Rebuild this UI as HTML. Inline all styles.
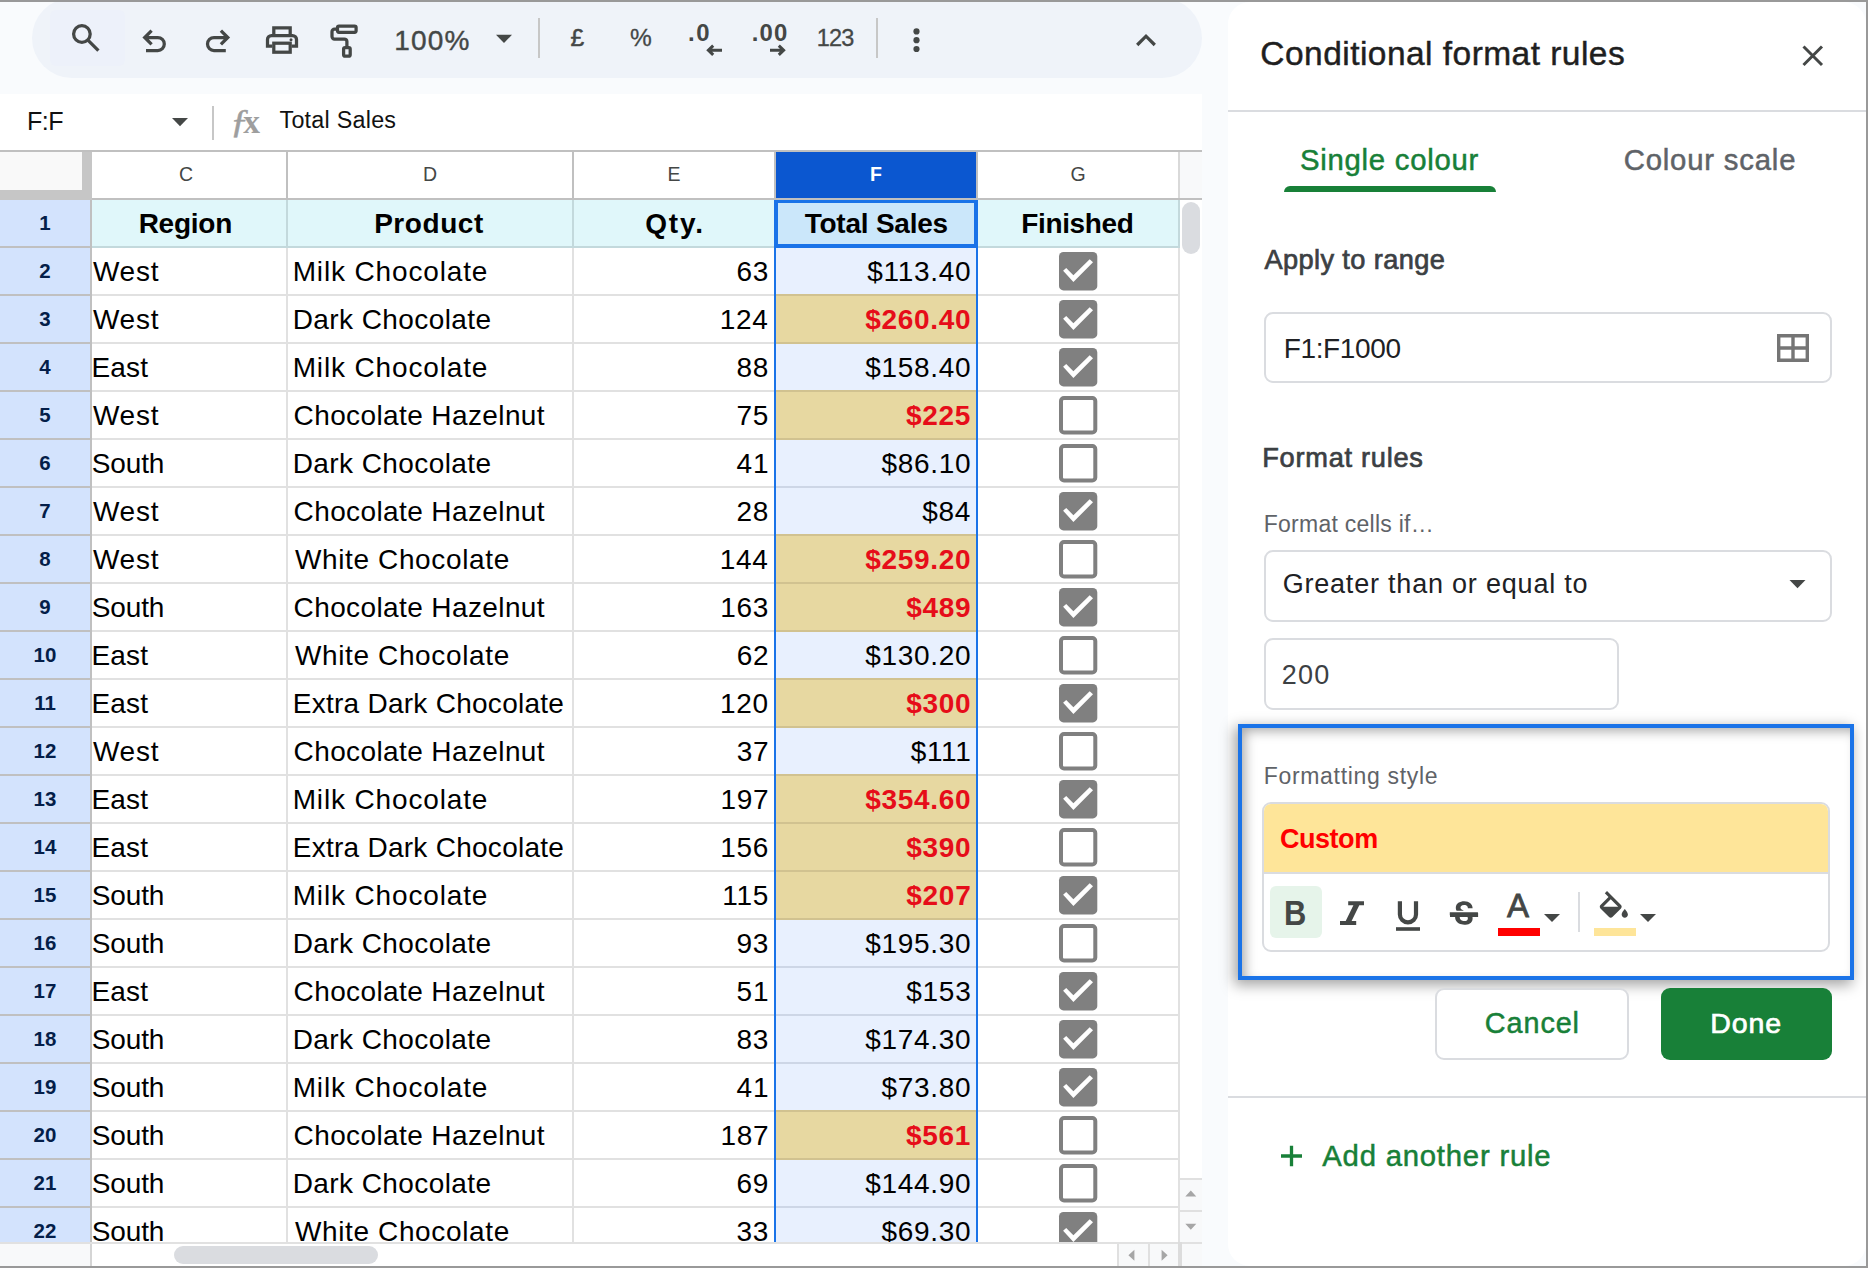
<!DOCTYPE html>
<html lang="en"><head><meta charset="utf-8"><title>Conditional format rules</title>
<style>
html,body{margin:0;padding:0;}
body{width:1868px;height:1268px;overflow:hidden;position:relative;background:#f9fbfd;font-family:"Liberation Sans",sans-serif;}
.t{position:absolute;white-space:nowrap;display:block;}
.r{position:absolute;}
svg{position:absolute;left:0;top:0;overflow:visible;}
</style></head><body>
<header class="toolbar">
<div class="r" style="left:32px;top:-2px;width:1170px;height:80px;background:#eff3f9;border-radius:40px;"></div>
<div class="r" style="left:50px;top:10px;width:75px;height:56px;background:#edf1fa;border-radius:6px;"></div>
<svg width="1868" height="1268" viewBox="0 0 1868 1268" fill="none" stroke="#444746" stroke-width="3.25"><circle cx="81.9" cy="34" r="8.3"/><path d="M87.9 40.1 L98.4 50.6"/><path d="M151.6 30.6 L144.7 37.5 L151.6 44.4 M145.2 37.5 H157.8 A6.5 6.5 0 0 1 157.8 50.5 H146"/><path d="M220.9 30.6 L227.8 37.5 L220.9 44.4 M227.3 37.5 H214 A6.5 6.5 0 0 0 214 50.5 H225.8"/><path d="M273.8 35 V27.8 H290.2 V35"/><path d="M272.3 46.2 H267.5 V39.5 A4 4 0 0 1 271.5 35.5 H292.5 A4 4 0 0 1 296.5 39.5 V46.2 H291.7"/><rect x="273.8" y="43.2" width="16.4" height="9"/><circle cx="291" cy="39.7" r="1.5" fill="#444746" stroke="none"/><rect x="337.5" y="26.1" width="18.6" height="6.2" rx="1.5"/><path d="M337.5 29.2 H334.5 A2.5 2.5 0 0 0 332 31.7 V36.5 A2.5 2.5 0 0 0 334.5 39 H344.4 A2.5 2.5 0 0 1 346.9 41.5 V46.5"/><rect x="343.6" y="47.6" width="6.6" height="8.6" rx="1.5"/><path d="M496 34.8 H512 L504 43 Z" fill="#444746" stroke="none"/><path d="M722 50.2 H708.5 M713.2 45.6 L708.4 50.2 L713.2 54.8" stroke-width="3"/><path d="M770 50.2 H783.5 M778.8 45.6 L783.6 50.2 L778.8 54.8" stroke-width="3"/><circle cx="916.5" cy="31.4" r="3.1" fill="#444746" stroke="none"/><circle cx="916.5" cy="40.2" r="3.1" fill="#444746" stroke="none"/><circle cx="916.5" cy="49" r="3.1" fill="#444746" stroke="none"/><path d="M1137.2 45 L1146 36.2 L1154.8 45"/></svg>
<div class="r" style="left:538px;top:18px;width:2px;height:40px;background:#c7c7c7;"></div>
<div class="r" style="left:876px;top:18px;width:2px;height:40px;background:#c7c7c7;"></div>
<span class="t" style="left:394.37px;top:26.60px;font-size:28px;line-height:28px;color:#444746;-webkit-text-stroke:0.4px #444746;letter-spacing:1.172px;">100%</span>
<span class="t" style="left:570.61px;top:25.66px;font-size:24.5px;line-height:24.5px;color:#444746;-webkit-text-stroke:0.5px #444746;">£</span>
<span class="t" style="left:630.03px;top:25.66px;font-size:24.5px;line-height:24.5px;color:#444746;-webkit-text-stroke:0.3px #444746;">%</span>
<span class="t" style="left:687.88px;top:21.47px;font-size:23.9px;line-height:23.9px;color:#444746;font-weight:700;letter-spacing:1.670px;">.0</span>
<span class="t" style="left:751.68px;top:21.47px;font-size:23.9px;line-height:23.9px;color:#444746;font-weight:700;letter-spacing:1.239px;">.00</span>
<span class="t" style="left:816.81px;top:27.01px;font-size:23.5px;line-height:23.5px;color:#444746;-webkit-text-stroke:0.3px #444746;letter-spacing:-0.793px;">123</span>
</header>
<section class="formula-bar">
<div class="r" style="left:0px;top:94px;width:1202px;height:56px;background:#fff;"></div>
<div class="r" style="left:0px;top:150px;width:1202px;height:2px;background:#c0c0c0;"></div>
<span class="t" style="left:27.04px;top:108.75px;font-size:25.1px;line-height:25.1px;color:#111;letter-spacing:-0.487px;">F:F</span>
<svg width="1868" height="1268" viewBox="0 0 1868 1268"><path d="M172 118 H188 L180 126.2 Z" fill="#444746"/></svg>
<div class="r" style="left:212px;top:106px;width:2px;height:34px;background:#c7c7c7;"></div>
<span class="t" style="left:230.30px;top:103.62px;font-size:34px;line-height:34px;color:#9e9e9e;-webkit-text-stroke:0.5px #9e9e9e;font-family:'Liberation Serif',serif;font-style:italic;transform:scaleX(1.12);transform-origin:0 0;">ƒ</span>
<span class="t" style="left:243.20px;top:104.54px;font-size:33.5px;line-height:33.5px;color:#9e9e9e;font-weight:700;font-family:'Liberation Serif',serif;">x</span>
<span class="t" style="left:279.48px;top:108.98px;font-size:23.3px;line-height:23.3px;color:#111;letter-spacing:0.259px;">Total Sales</span>
</section>
<main class="grid">
<div class="r" style="left:0px;top:152px;width:1202px;height:1092px;background:#fff;"></div>
<div class="r" style="left:0px;top:152px;width:82px;height:38px;background:#f9f9f9;"></div>
<div class="r" style="left:82px;top:152px;width:10px;height:48px;background:#c6c6c6;"></div>
<div class="r" style="left:0px;top:190px;width:92px;height:10px;background:#c6c6c6;"></div>
<div class="r" style="left:1180px;top:152px;width:22px;height:46px;background:#f8f9fa;"></div>
<div class="r" style="left:92px;top:200px;width:1088px;height:46px;background:#e0f7fa;"></div>
<div class="r" style="left:0px;top:200px;width:90px;height:1042px;background:#d3e3fd;"></div>
<div class="r" style="left:90px;top:200px;width:2px;height:1042px;background:#c0c0c0;"></div>
<div class="r" style="left:776px;top:152px;width:200px;height:46px;background:#0b57d0;"></div>
<div class="r" style="left:776px;top:200px;width:200px;height:46px;background:#cbe7fa;"></div>
<div class="r" style="left:776px;top:248px;width:200px;height:46px;background:#e8f0fe;"></div>
<div class="r" style="left:776px;top:295px;width:200px;height:48px;background:#e7d8a1;"></div>
<div class="r" style="left:776px;top:344px;width:200px;height:46px;background:#e8f0fe;"></div>
<div class="r" style="left:776px;top:391px;width:200px;height:48px;background:#e7d8a1;"></div>
<div class="r" style="left:776px;top:440px;width:200px;height:46px;background:#e8f0fe;"></div>
<div class="r" style="left:776px;top:488px;width:200px;height:46px;background:#e8f0fe;"></div>
<div class="r" style="left:776px;top:535px;width:200px;height:48px;background:#e7d8a1;"></div>
<div class="r" style="left:776px;top:583px;width:200px;height:48px;background:#e7d8a1;"></div>
<div class="r" style="left:776px;top:632px;width:200px;height:46px;background:#e8f0fe;"></div>
<div class="r" style="left:776px;top:679px;width:200px;height:48px;background:#e7d8a1;"></div>
<div class="r" style="left:776px;top:728px;width:200px;height:46px;background:#e8f0fe;"></div>
<div class="r" style="left:776px;top:775px;width:200px;height:48px;background:#e7d8a1;"></div>
<div class="r" style="left:776px;top:823px;width:200px;height:48px;background:#e7d8a1;"></div>
<div class="r" style="left:776px;top:871px;width:200px;height:48px;background:#e7d8a1;"></div>
<div class="r" style="left:776px;top:920px;width:200px;height:46px;background:#e8f0fe;"></div>
<div class="r" style="left:776px;top:968px;width:200px;height:46px;background:#e8f0fe;"></div>
<div class="r" style="left:776px;top:1016px;width:200px;height:46px;background:#e8f0fe;"></div>
<div class="r" style="left:776px;top:1064px;width:200px;height:46px;background:#e8f0fe;"></div>
<div class="r" style="left:776px;top:1111px;width:200px;height:48px;background:#e7d8a1;"></div>
<div class="r" style="left:776px;top:1160px;width:200px;height:46px;background:#e8f0fe;"></div>
<div class="r" style="left:776px;top:1208px;width:200px;height:34px;background:#e8f0fe;"></div>
<div class="r" style="left:92px;top:198px;width:1110px;height:2px;background:#c0c0c0;"></div>
<div class="r" style="left:0px;top:246px;width:90px;height:2px;background:#c0c0c0;"></div>
<div class="r" style="left:92px;top:246px;width:682px;height:2px;background:#c3d9dc;"></div>
<div class="r" style="left:978px;top:246px;width:202px;height:2px;background:#c3d9dc;"></div>
<div class="r" style="left:0px;top:294px;width:90px;height:2px;background:#c0c0c0;"></div>
<div class="r" style="left:92px;top:294px;width:682px;height:2px;background:#e1e1e1;"></div>
<div class="r" style="left:978px;top:294px;width:202px;height:2px;background:#e1e1e1;"></div>
<div class="r" style="left:776px;top:294px;width:200px;height:2px;background:#d1c290;"></div>
<div class="r" style="left:0px;top:342px;width:90px;height:2px;background:#c0c0c0;"></div>
<div class="r" style="left:92px;top:342px;width:682px;height:2px;background:#e1e1e1;"></div>
<div class="r" style="left:978px;top:342px;width:202px;height:2px;background:#e1e1e1;"></div>
<div class="r" style="left:776px;top:342px;width:200px;height:2px;background:#d1c290;"></div>
<div class="r" style="left:0px;top:390px;width:90px;height:2px;background:#c0c0c0;"></div>
<div class="r" style="left:92px;top:390px;width:682px;height:2px;background:#e1e1e1;"></div>
<div class="r" style="left:978px;top:390px;width:202px;height:2px;background:#e1e1e1;"></div>
<div class="r" style="left:776px;top:390px;width:200px;height:2px;background:#d1c290;"></div>
<div class="r" style="left:0px;top:438px;width:90px;height:2px;background:#c0c0c0;"></div>
<div class="r" style="left:92px;top:438px;width:682px;height:2px;background:#e1e1e1;"></div>
<div class="r" style="left:978px;top:438px;width:202px;height:2px;background:#e1e1e1;"></div>
<div class="r" style="left:776px;top:438px;width:200px;height:2px;background:#d1c290;"></div>
<div class="r" style="left:0px;top:486px;width:90px;height:2px;background:#c0c0c0;"></div>
<div class="r" style="left:92px;top:486px;width:682px;height:2px;background:#e1e1e1;"></div>
<div class="r" style="left:978px;top:486px;width:202px;height:2px;background:#e1e1e1;"></div>
<div class="r" style="left:776px;top:486px;width:200px;height:2px;background:#cdd6e6;"></div>
<div class="r" style="left:0px;top:534px;width:90px;height:2px;background:#c0c0c0;"></div>
<div class="r" style="left:92px;top:534px;width:682px;height:2px;background:#e1e1e1;"></div>
<div class="r" style="left:978px;top:534px;width:202px;height:2px;background:#e1e1e1;"></div>
<div class="r" style="left:776px;top:534px;width:200px;height:2px;background:#d1c290;"></div>
<div class="r" style="left:0px;top:582px;width:90px;height:2px;background:#c0c0c0;"></div>
<div class="r" style="left:92px;top:582px;width:682px;height:2px;background:#e1e1e1;"></div>
<div class="r" style="left:978px;top:582px;width:202px;height:2px;background:#e1e1e1;"></div>
<div class="r" style="left:776px;top:582px;width:200px;height:2px;background:#d1c290;"></div>
<div class="r" style="left:0px;top:630px;width:90px;height:2px;background:#c0c0c0;"></div>
<div class="r" style="left:92px;top:630px;width:682px;height:2px;background:#e1e1e1;"></div>
<div class="r" style="left:978px;top:630px;width:202px;height:2px;background:#e1e1e1;"></div>
<div class="r" style="left:776px;top:630px;width:200px;height:2px;background:#d1c290;"></div>
<div class="r" style="left:0px;top:678px;width:90px;height:2px;background:#c0c0c0;"></div>
<div class="r" style="left:92px;top:678px;width:682px;height:2px;background:#e1e1e1;"></div>
<div class="r" style="left:978px;top:678px;width:202px;height:2px;background:#e1e1e1;"></div>
<div class="r" style="left:776px;top:678px;width:200px;height:2px;background:#d1c290;"></div>
<div class="r" style="left:0px;top:726px;width:90px;height:2px;background:#c0c0c0;"></div>
<div class="r" style="left:92px;top:726px;width:682px;height:2px;background:#e1e1e1;"></div>
<div class="r" style="left:978px;top:726px;width:202px;height:2px;background:#e1e1e1;"></div>
<div class="r" style="left:776px;top:726px;width:200px;height:2px;background:#d1c290;"></div>
<div class="r" style="left:0px;top:774px;width:90px;height:2px;background:#c0c0c0;"></div>
<div class="r" style="left:92px;top:774px;width:682px;height:2px;background:#e1e1e1;"></div>
<div class="r" style="left:978px;top:774px;width:202px;height:2px;background:#e1e1e1;"></div>
<div class="r" style="left:776px;top:774px;width:200px;height:2px;background:#d1c290;"></div>
<div class="r" style="left:0px;top:822px;width:90px;height:2px;background:#c0c0c0;"></div>
<div class="r" style="left:92px;top:822px;width:682px;height:2px;background:#e1e1e1;"></div>
<div class="r" style="left:978px;top:822px;width:202px;height:2px;background:#e1e1e1;"></div>
<div class="r" style="left:776px;top:822px;width:200px;height:2px;background:#d1c290;"></div>
<div class="r" style="left:0px;top:870px;width:90px;height:2px;background:#c0c0c0;"></div>
<div class="r" style="left:92px;top:870px;width:682px;height:2px;background:#e1e1e1;"></div>
<div class="r" style="left:978px;top:870px;width:202px;height:2px;background:#e1e1e1;"></div>
<div class="r" style="left:776px;top:870px;width:200px;height:2px;background:#d1c290;"></div>
<div class="r" style="left:0px;top:918px;width:90px;height:2px;background:#c0c0c0;"></div>
<div class="r" style="left:92px;top:918px;width:682px;height:2px;background:#e1e1e1;"></div>
<div class="r" style="left:978px;top:918px;width:202px;height:2px;background:#e1e1e1;"></div>
<div class="r" style="left:776px;top:918px;width:200px;height:2px;background:#d1c290;"></div>
<div class="r" style="left:0px;top:966px;width:90px;height:2px;background:#c0c0c0;"></div>
<div class="r" style="left:92px;top:966px;width:682px;height:2px;background:#e1e1e1;"></div>
<div class="r" style="left:978px;top:966px;width:202px;height:2px;background:#e1e1e1;"></div>
<div class="r" style="left:776px;top:966px;width:200px;height:2px;background:#cdd6e6;"></div>
<div class="r" style="left:0px;top:1014px;width:90px;height:2px;background:#c0c0c0;"></div>
<div class="r" style="left:92px;top:1014px;width:682px;height:2px;background:#e1e1e1;"></div>
<div class="r" style="left:978px;top:1014px;width:202px;height:2px;background:#e1e1e1;"></div>
<div class="r" style="left:776px;top:1014px;width:200px;height:2px;background:#cdd6e6;"></div>
<div class="r" style="left:0px;top:1062px;width:90px;height:2px;background:#c0c0c0;"></div>
<div class="r" style="left:92px;top:1062px;width:682px;height:2px;background:#e1e1e1;"></div>
<div class="r" style="left:978px;top:1062px;width:202px;height:2px;background:#e1e1e1;"></div>
<div class="r" style="left:776px;top:1062px;width:200px;height:2px;background:#cdd6e6;"></div>
<div class="r" style="left:0px;top:1110px;width:90px;height:2px;background:#c0c0c0;"></div>
<div class="r" style="left:92px;top:1110px;width:682px;height:2px;background:#e1e1e1;"></div>
<div class="r" style="left:978px;top:1110px;width:202px;height:2px;background:#e1e1e1;"></div>
<div class="r" style="left:776px;top:1110px;width:200px;height:2px;background:#d1c290;"></div>
<div class="r" style="left:0px;top:1158px;width:90px;height:2px;background:#c0c0c0;"></div>
<div class="r" style="left:92px;top:1158px;width:682px;height:2px;background:#e1e1e1;"></div>
<div class="r" style="left:978px;top:1158px;width:202px;height:2px;background:#e1e1e1;"></div>
<div class="r" style="left:776px;top:1158px;width:200px;height:2px;background:#d1c290;"></div>
<div class="r" style="left:0px;top:1206px;width:90px;height:2px;background:#c0c0c0;"></div>
<div class="r" style="left:92px;top:1206px;width:682px;height:2px;background:#e1e1e1;"></div>
<div class="r" style="left:978px;top:1206px;width:202px;height:2px;background:#e1e1e1;"></div>
<div class="r" style="left:776px;top:1206px;width:200px;height:2px;background:#cdd6e6;"></div>
<div class="r" style="left:286px;top:152px;width:2px;height:46px;background:#c0c0c0;"></div>
<div class="r" style="left:286px;top:200px;width:2px;height:46px;background:#c3d9dc;"></div>
<div class="r" style="left:286px;top:248px;width:2px;height:994px;background:#e1e1e1;"></div>
<div class="r" style="left:572px;top:152px;width:2px;height:46px;background:#c0c0c0;"></div>
<div class="r" style="left:572px;top:200px;width:2px;height:46px;background:#c3d9dc;"></div>
<div class="r" style="left:572px;top:248px;width:2px;height:994px;background:#e1e1e1;"></div>
<div class="r" style="left:1178px;top:152px;width:2px;height:46px;background:#d9d9d9;"></div>
<div class="r" style="left:1178px;top:200px;width:2px;height:46px;background:#c3d9dc;"></div>
<div class="r" style="left:1178px;top:248px;width:2px;height:994px;background:#e1e1e1;"></div>
<div class="r" style="left:774px;top:152px;width:2px;height:46px;background:#c0c0c0;"></div>
<div class="r" style="left:976px;top:152px;width:2px;height:46px;background:#c0c0c0;"></div>
<div class="r" style="left:774px;top:198px;width:2px;height:1044px;background:#1a73e8;"></div>
<div class="r" style="left:976px;top:198px;width:2px;height:1044px;background:#1a73e8;"></div>
<div class="r" style="left:774px;top:199px;width:196px;height:41px;border:4px solid #1a73e8;"></div>
<div class="r" style="left:774px;top:198px;width:204px;height:2px;background:#c0c0c0;"></div>
<span class="t" style="left:178.96px;top:164.79px;font-size:19.5px;line-height:19.5px;color:#444746;">C</span>
<span class="t" style="left:422.96px;top:164.79px;font-size:19.5px;line-height:19.5px;color:#444746;">D</span>
<span class="t" style="left:667.50px;top:164.79px;font-size:19.5px;line-height:19.5px;color:#444746;">E</span>
<span class="t" style="left:870.04px;top:164.79px;font-size:19.5px;line-height:19.5px;color:#fff;font-weight:700;">F</span>
<span class="t" style="left:1070.42px;top:164.79px;font-size:19.5px;line-height:19.5px;color:#444746;">G</span>
<span class="t" style="left:39.30px;top:212.65px;font-size:20.5px;line-height:20.5px;color:#041e49;font-weight:700;">1</span>
<span class="t" style="left:39.30px;top:260.65px;font-size:20.5px;line-height:20.5px;color:#041e49;font-weight:700;">2</span>
<span class="t" style="left:39.30px;top:308.65px;font-size:20.5px;line-height:20.5px;color:#041e49;font-weight:700;">3</span>
<span class="t" style="left:39.30px;top:356.65px;font-size:20.5px;line-height:20.5px;color:#041e49;font-weight:700;">4</span>
<span class="t" style="left:39.30px;top:404.65px;font-size:20.5px;line-height:20.5px;color:#041e49;font-weight:700;">5</span>
<span class="t" style="left:39.30px;top:452.65px;font-size:20.5px;line-height:20.5px;color:#041e49;font-weight:700;">6</span>
<span class="t" style="left:39.30px;top:500.65px;font-size:20.5px;line-height:20.5px;color:#041e49;font-weight:700;">7</span>
<span class="t" style="left:39.30px;top:548.65px;font-size:20.5px;line-height:20.5px;color:#041e49;font-weight:700;">8</span>
<span class="t" style="left:39.30px;top:596.65px;font-size:20.5px;line-height:20.5px;color:#041e49;font-weight:700;">9</span>
<span class="t" style="left:33.60px;top:644.65px;font-size:20.5px;line-height:20.5px;color:#041e49;font-weight:700;">10</span>
<span class="t" style="left:34.16px;top:692.65px;font-size:20.5px;line-height:20.5px;color:#041e49;font-weight:700;">11</span>
<span class="t" style="left:33.60px;top:740.65px;font-size:20.5px;line-height:20.5px;color:#041e49;font-weight:700;">12</span>
<span class="t" style="left:33.60px;top:788.65px;font-size:20.5px;line-height:20.5px;color:#041e49;font-weight:700;">13</span>
<span class="t" style="left:33.60px;top:836.65px;font-size:20.5px;line-height:20.5px;color:#041e49;font-weight:700;">14</span>
<span class="t" style="left:33.60px;top:884.65px;font-size:20.5px;line-height:20.5px;color:#041e49;font-weight:700;">15</span>
<span class="t" style="left:33.60px;top:932.65px;font-size:20.5px;line-height:20.5px;color:#041e49;font-weight:700;">16</span>
<span class="t" style="left:33.60px;top:980.65px;font-size:20.5px;line-height:20.5px;color:#041e49;font-weight:700;">17</span>
<span class="t" style="left:33.60px;top:1028.65px;font-size:20.5px;line-height:20.5px;color:#041e49;font-weight:700;">18</span>
<span class="t" style="left:33.60px;top:1076.65px;font-size:20.5px;line-height:20.5px;color:#041e49;font-weight:700;">19</span>
<span class="t" style="left:33.60px;top:1124.65px;font-size:20.5px;line-height:20.5px;color:#041e49;font-weight:700;">20</span>
<span class="t" style="left:33.60px;top:1172.65px;font-size:20.5px;line-height:20.5px;color:#041e49;font-weight:700;">21</span>
<span class="t" style="left:33.60px;top:1220.65px;font-size:20.5px;line-height:20.5px;color:#041e49;font-weight:700;">22</span>
<span class="t" style="left:138.63px;top:210.00px;font-size:28px;line-height:28px;color:#000;font-weight:700;letter-spacing:-0.255px;">Region</span>
<span class="t" style="left:374.13px;top:210.00px;font-size:28px;line-height:28px;color:#000;font-weight:700;letter-spacing:0.572px;">Product</span>
<span class="t" style="left:645.25px;top:210.00px;font-size:28px;line-height:28px;color:#000;font-weight:700;letter-spacing:1.833px;">Qty.</span>
<span class="t" style="left:804.69px;top:210.00px;font-size:28px;line-height:28px;color:#000;font-weight:700;letter-spacing:-0.229px;">Total Sales</span>
<span class="t" style="left:1021.23px;top:210.00px;font-size:28px;line-height:28px;color:#000;font-weight:700;letter-spacing:-0.343px;">Finished</span>
<div class="r" style="left:0;top:0;width:1202px;height:1242px;overflow:hidden;">
<span class="t" style="left:92.88px;top:258.00px;font-size:28px;line-height:28px;color:#000;letter-spacing:0.818px;">West</span>
<span class="t" style="left:292.70px;top:258.00px;font-size:28px;line-height:28px;color:#000;letter-spacing:0.855px;">Milk Chocolate</span>
<span class="t" style="left:736.49px;top:258.00px;font-size:28px;line-height:28px;color:#000;letter-spacing:0.700px;">63</span>
<span class="t" style="left:867.26px;top:258.00px;font-size:28px;line-height:28px;color:#000;letter-spacing:0.700px;">$113.40</span>
<span class="t" style="left:92.88px;top:306.00px;font-size:28px;line-height:28px;color:#000;letter-spacing:0.818px;">West</span>
<span class="t" style="left:292.70px;top:306.00px;font-size:28px;line-height:28px;color:#000;letter-spacing:0.412px;">Dark Chocolate</span>
<span class="t" style="left:719.80px;top:306.00px;font-size:28px;line-height:28px;color:#000;letter-spacing:0.700px;">124</span>
<span class="t" style="left:865.24px;top:306.00px;font-size:28px;line-height:28px;color:#e60d19;font-weight:700;letter-spacing:0.700px;">$260.40</span>
<span class="t" style="left:91.50px;top:354.00px;font-size:28px;line-height:28px;color:#000;letter-spacing:0.158px;">East</span>
<span class="t" style="left:292.70px;top:354.00px;font-size:28px;line-height:28px;color:#000;letter-spacing:0.855px;">Milk Chocolate</span>
<span class="t" style="left:736.47px;top:354.00px;font-size:28px;line-height:28px;color:#000;letter-spacing:0.700px;">88</span>
<span class="t" style="left:865.18px;top:354.00px;font-size:28px;line-height:28px;color:#000;letter-spacing:0.700px;">$158.40</span>
<span class="t" style="left:92.88px;top:402.00px;font-size:28px;line-height:28px;color:#000;letter-spacing:0.818px;">West</span>
<span class="t" style="left:293.58px;top:402.00px;font-size:28px;line-height:28px;color:#000;letter-spacing:0.391px;">Chocolate Hazelnut</span>
<span class="t" style="left:736.43px;top:402.00px;font-size:28px;line-height:28px;color:#000;letter-spacing:0.700px;">75</span>
<span class="t" style="left:905.89px;top:402.00px;font-size:28px;line-height:28px;color:#e60d19;font-weight:700;letter-spacing:0.700px;">$225</span>
<span class="t" style="left:91.73px;top:450.00px;font-size:28px;line-height:28px;color:#000;letter-spacing:-0.121px;">South</span>
<span class="t" style="left:292.70px;top:450.00px;font-size:28px;line-height:28px;color:#000;letter-spacing:0.412px;">Dark Chocolate</span>
<span class="t" style="left:736.62px;top:450.00px;font-size:28px;line-height:28px;color:#000;letter-spacing:0.700px;">41</span>
<span class="t" style="left:881.45px;top:450.00px;font-size:28px;line-height:28px;color:#000;letter-spacing:0.700px;">$86.10</span>
<span class="t" style="left:92.88px;top:498.00px;font-size:28px;line-height:28px;color:#000;letter-spacing:0.818px;">West</span>
<span class="t" style="left:293.58px;top:498.00px;font-size:28px;line-height:28px;color:#000;letter-spacing:0.391px;">Chocolate Hazelnut</span>
<span class="t" style="left:736.47px;top:498.00px;font-size:28px;line-height:28px;color:#000;letter-spacing:0.700px;">28</span>
<span class="t" style="left:922.20px;top:498.00px;font-size:28px;line-height:28px;color:#000;letter-spacing:0.700px;">$84</span>
<span class="t" style="left:92.88px;top:546.00px;font-size:28px;line-height:28px;color:#000;letter-spacing:0.818px;">West</span>
<span class="t" style="left:294.88px;top:546.00px;font-size:28px;line-height:28px;color:#000;letter-spacing:0.638px;">White Chocolate</span>
<span class="t" style="left:719.80px;top:546.00px;font-size:28px;line-height:28px;color:#000;letter-spacing:0.700px;">144</span>
<span class="t" style="left:865.24px;top:546.00px;font-size:28px;line-height:28px;color:#e60d19;font-weight:700;letter-spacing:0.700px;">$259.20</span>
<span class="t" style="left:91.73px;top:594.00px;font-size:28px;line-height:28px;color:#000;letter-spacing:-0.121px;">South</span>
<span class="t" style="left:293.58px;top:594.00px;font-size:28px;line-height:28px;color:#000;letter-spacing:0.391px;">Chocolate Hazelnut</span>
<span class="t" style="left:720.21px;top:594.00px;font-size:28px;line-height:28px;color:#000;letter-spacing:0.700px;">163</span>
<span class="t" style="left:906.15px;top:594.00px;font-size:28px;line-height:28px;color:#e60d19;font-weight:700;letter-spacing:0.700px;">$489</span>
<span class="t" style="left:91.50px;top:642.00px;font-size:28px;line-height:28px;color:#000;letter-spacing:0.158px;">East</span>
<span class="t" style="left:294.88px;top:642.00px;font-size:28px;line-height:28px;color:#000;letter-spacing:0.638px;">White Chocolate</span>
<span class="t" style="left:736.66px;top:642.00px;font-size:28px;line-height:28px;color:#000;letter-spacing:0.700px;">62</span>
<span class="t" style="left:865.18px;top:642.00px;font-size:28px;line-height:28px;color:#000;letter-spacing:0.700px;">$130.20</span>
<span class="t" style="left:91.50px;top:690.00px;font-size:28px;line-height:28px;color:#000;letter-spacing:0.158px;">East</span>
<span class="t" style="left:292.70px;top:690.00px;font-size:28px;line-height:28px;color:#000;letter-spacing:0.270px;">Extra Dark Chocolate</span>
<span class="t" style="left:720.08px;top:690.00px;font-size:28px;line-height:28px;color:#000;letter-spacing:0.700px;">120</span>
<span class="t" style="left:906.26px;top:690.00px;font-size:28px;line-height:28px;color:#e60d19;font-weight:700;letter-spacing:0.700px;">$300</span>
<span class="t" style="left:92.88px;top:738.00px;font-size:28px;line-height:28px;color:#000;letter-spacing:0.818px;">West</span>
<span class="t" style="left:293.58px;top:738.00px;font-size:28px;line-height:28px;color:#000;letter-spacing:0.391px;">Chocolate Hazelnut</span>
<span class="t" style="left:736.66px;top:738.00px;font-size:28px;line-height:28px;color:#000;letter-spacing:0.700px;">37</span>
<span class="t" style="left:910.63px;top:738.00px;font-size:28px;line-height:28px;color:#000;letter-spacing:0.700px;">$111</span>
<span class="t" style="left:91.50px;top:786.00px;font-size:28px;line-height:28px;color:#000;letter-spacing:0.158px;">East</span>
<span class="t" style="left:292.70px;top:786.00px;font-size:28px;line-height:28px;color:#000;letter-spacing:0.855px;">Milk Chocolate</span>
<span class="t" style="left:720.39px;top:786.00px;font-size:28px;line-height:28px;color:#000;letter-spacing:0.700px;">197</span>
<span class="t" style="left:865.24px;top:786.00px;font-size:28px;line-height:28px;color:#e60d19;font-weight:700;letter-spacing:0.700px;">$354.60</span>
<span class="t" style="left:91.50px;top:834.00px;font-size:28px;line-height:28px;color:#000;letter-spacing:0.158px;">East</span>
<span class="t" style="left:292.70px;top:834.00px;font-size:28px;line-height:28px;color:#000;letter-spacing:0.270px;">Extra Dark Chocolate</span>
<span class="t" style="left:720.21px;top:834.00px;font-size:28px;line-height:28px;color:#000;letter-spacing:0.700px;">156</span>
<span class="t" style="left:906.26px;top:834.00px;font-size:28px;line-height:28px;color:#e60d19;font-weight:700;letter-spacing:0.700px;">$390</span>
<span class="t" style="left:91.73px;top:882.00px;font-size:28px;line-height:28px;color:#000;letter-spacing:-0.121px;">South</span>
<span class="t" style="left:292.70px;top:882.00px;font-size:28px;line-height:28px;color:#000;letter-spacing:0.855px;">Milk Chocolate</span>
<span class="t" style="left:722.24px;top:882.00px;font-size:28px;line-height:28px;color:#000;letter-spacing:0.700px;">115</span>
<span class="t" style="left:906.34px;top:882.00px;font-size:28px;line-height:28px;color:#e60d19;font-weight:700;letter-spacing:0.700px;">$207</span>
<span class="t" style="left:91.73px;top:930.00px;font-size:28px;line-height:28px;color:#000;letter-spacing:-0.121px;">South</span>
<span class="t" style="left:292.70px;top:930.00px;font-size:28px;line-height:28px;color:#000;letter-spacing:0.412px;">Dark Chocolate</span>
<span class="t" style="left:736.49px;top:930.00px;font-size:28px;line-height:28px;color:#000;letter-spacing:0.700px;">93</span>
<span class="t" style="left:865.18px;top:930.00px;font-size:28px;line-height:28px;color:#000;letter-spacing:0.700px;">$195.30</span>
<span class="t" style="left:91.50px;top:978.00px;font-size:28px;line-height:28px;color:#000;letter-spacing:0.158px;">East</span>
<span class="t" style="left:293.58px;top:978.00px;font-size:28px;line-height:28px;color:#000;letter-spacing:0.391px;">Chocolate Hazelnut</span>
<span class="t" style="left:736.62px;top:978.00px;font-size:28px;line-height:28px;color:#000;letter-spacing:0.700px;">51</span>
<span class="t" style="left:906.34px;top:978.00px;font-size:28px;line-height:28px;color:#000;letter-spacing:0.700px;">$153</span>
<span class="t" style="left:91.73px;top:1026.00px;font-size:28px;line-height:28px;color:#000;letter-spacing:-0.121px;">South</span>
<span class="t" style="left:292.70px;top:1026.00px;font-size:28px;line-height:28px;color:#000;letter-spacing:0.412px;">Dark Chocolate</span>
<span class="t" style="left:736.49px;top:1026.00px;font-size:28px;line-height:28px;color:#000;letter-spacing:0.700px;">83</span>
<span class="t" style="left:865.18px;top:1026.00px;font-size:28px;line-height:28px;color:#000;letter-spacing:0.700px;">$174.30</span>
<span class="t" style="left:91.73px;top:1074.00px;font-size:28px;line-height:28px;color:#000;letter-spacing:-0.121px;">South</span>
<span class="t" style="left:292.70px;top:1074.00px;font-size:28px;line-height:28px;color:#000;letter-spacing:0.855px;">Milk Chocolate</span>
<span class="t" style="left:736.62px;top:1074.00px;font-size:28px;line-height:28px;color:#000;letter-spacing:0.700px;">41</span>
<span class="t" style="left:881.45px;top:1074.00px;font-size:28px;line-height:28px;color:#000;letter-spacing:0.700px;">$73.80</span>
<span class="t" style="left:91.73px;top:1122.00px;font-size:28px;line-height:28px;color:#000;letter-spacing:-0.121px;">South</span>
<span class="t" style="left:293.58px;top:1122.00px;font-size:28px;line-height:28px;color:#000;letter-spacing:0.391px;">Chocolate Hazelnut</span>
<span class="t" style="left:720.39px;top:1122.00px;font-size:28px;line-height:28px;color:#000;letter-spacing:0.700px;">187</span>
<span class="t" style="left:905.89px;top:1122.00px;font-size:28px;line-height:28px;color:#e60d19;font-weight:700;letter-spacing:0.700px;">$561</span>
<span class="t" style="left:91.73px;top:1170.00px;font-size:28px;line-height:28px;color:#000;letter-spacing:-0.121px;">South</span>
<span class="t" style="left:292.70px;top:1170.00px;font-size:28px;line-height:28px;color:#000;letter-spacing:0.412px;">Dark Chocolate</span>
<span class="t" style="left:736.58px;top:1170.00px;font-size:28px;line-height:28px;color:#000;letter-spacing:0.700px;">69</span>
<span class="t" style="left:865.18px;top:1170.00px;font-size:28px;line-height:28px;color:#000;letter-spacing:0.700px;">$144.90</span>
<span class="t" style="left:91.73px;top:1218.00px;font-size:28px;line-height:28px;color:#000;letter-spacing:-0.121px;">South</span>
<span class="t" style="left:294.88px;top:1218.00px;font-size:28px;line-height:28px;color:#000;letter-spacing:0.638px;">White Chocolate</span>
<span class="t" style="left:736.49px;top:1218.00px;font-size:28px;line-height:28px;color:#000;letter-spacing:0.700px;">33</span>
<span class="t" style="left:881.45px;top:1218.00px;font-size:28px;line-height:28px;color:#000;letter-spacing:0.700px;">$69.30</span>
<svg width="1202" height="1242" viewBox="0 0 1202 1242"><rect x="1059" y="252" width="38.3" height="38.4" rx="4.5" fill="#808080"/><path d="M1063.1 270.8 L1066.2 267.9 L1073.4 275.3 L1089.7 259.2 L1093 262.3 L1073.4 282 Z" fill="#fff"/><rect x="1059" y="300" width="38.3" height="38.4" rx="4.5" fill="#808080"/><path d="M1063.1 318.8 L1066.2 315.9 L1073.4 323.3 L1089.7 307.2 L1093 310.3 L1073.4 330 Z" fill="#fff"/><rect x="1059" y="348" width="38.3" height="38.4" rx="4.5" fill="#808080"/><path d="M1063.1 366.8 L1066.2 363.9 L1073.4 371.3 L1089.7 355.2 L1093 358.3 L1073.4 378 Z" fill="#fff"/><rect x="1061" y="398" width="34.3" height="34.4" rx="3" fill="#fff" stroke="#808080" stroke-width="4"/><rect x="1061" y="446" width="34.3" height="34.4" rx="3" fill="#fff" stroke="#808080" stroke-width="4"/><rect x="1059" y="492" width="38.3" height="38.4" rx="4.5" fill="#808080"/><path d="M1063.1 510.8 L1066.2 507.9 L1073.4 515.3 L1089.7 499.2 L1093 502.3 L1073.4 522 Z" fill="#fff"/><rect x="1061" y="542" width="34.3" height="34.4" rx="3" fill="#fff" stroke="#808080" stroke-width="4"/><rect x="1059" y="588" width="38.3" height="38.4" rx="4.5" fill="#808080"/><path d="M1063.1 606.8 L1066.2 603.9 L1073.4 611.3 L1089.7 595.2 L1093 598.3 L1073.4 618 Z" fill="#fff"/><rect x="1061" y="638" width="34.3" height="34.4" rx="3" fill="#fff" stroke="#808080" stroke-width="4"/><rect x="1059" y="684" width="38.3" height="38.4" rx="4.5" fill="#808080"/><path d="M1063.1 702.8 L1066.2 699.9 L1073.4 707.3 L1089.7 691.2 L1093 694.3 L1073.4 714 Z" fill="#fff"/><rect x="1061" y="734" width="34.3" height="34.4" rx="3" fill="#fff" stroke="#808080" stroke-width="4"/><rect x="1059" y="780" width="38.3" height="38.4" rx="4.5" fill="#808080"/><path d="M1063.1 798.8 L1066.2 795.9 L1073.4 803.3 L1089.7 787.2 L1093 790.3 L1073.4 810 Z" fill="#fff"/><rect x="1061" y="830" width="34.3" height="34.4" rx="3" fill="#fff" stroke="#808080" stroke-width="4"/><rect x="1059" y="876" width="38.3" height="38.4" rx="4.5" fill="#808080"/><path d="M1063.1 894.8 L1066.2 891.9 L1073.4 899.3 L1089.7 883.2 L1093 886.3 L1073.4 906 Z" fill="#fff"/><rect x="1061" y="926" width="34.3" height="34.4" rx="3" fill="#fff" stroke="#808080" stroke-width="4"/><rect x="1059" y="972" width="38.3" height="38.4" rx="4.5" fill="#808080"/><path d="M1063.1 990.8 L1066.2 987.9 L1073.4 995.3 L1089.7 979.2 L1093 982.3 L1073.4 1002 Z" fill="#fff"/><rect x="1059" y="1020" width="38.3" height="38.4" rx="4.5" fill="#808080"/><path d="M1063.1 1038.8 L1066.2 1035.9 L1073.4 1043.3 L1089.7 1027.2 L1093 1030.3 L1073.4 1050 Z" fill="#fff"/><rect x="1059" y="1068" width="38.3" height="38.4" rx="4.5" fill="#808080"/><path d="M1063.1 1086.8 L1066.2 1083.9 L1073.4 1091.3 L1089.7 1075.2 L1093 1078.3 L1073.4 1098 Z" fill="#fff"/><rect x="1061" y="1118" width="34.3" height="34.4" rx="3" fill="#fff" stroke="#808080" stroke-width="4"/><rect x="1061" y="1166" width="34.3" height="34.4" rx="3" fill="#fff" stroke="#808080" stroke-width="4"/><rect x="1059" y="1212" width="38.3" height="38.4" rx="4.5" fill="#808080"/><path d="M1063.1 1230.8 L1066.2 1227.9 L1073.4 1235.3 L1089.7 1219.2 L1093 1222.3 L1073.4 1242 Z" fill="#fff"/></svg>
</div>
<div class="r" style="left:1182px;top:202px;width:18px;height:52px;background:#dadce0;border-radius:9px;"></div>
<div class="r" style="left:1180px;top:1178px;width:22px;height:2px;background:#e0e0e0;"></div>
<div class="r" style="left:1180px;top:1180px;width:22px;height:30px;background:#f8f9fa;"></div>
<div class="r" style="left:1180px;top:1210px;width:22px;height:2px;background:#e0e0e0;"></div>
<div class="r" style="left:1180px;top:1212px;width:22px;height:30px;background:#f8f9fa;"></div>
<div class="r" style="left:0px;top:1242px;width:1202px;height:2px;background:#e1e1e1;"></div>
<div class="r" style="left:0px;top:1244px;width:90px;height:22px;background:#f8f9fa;"></div>
<div class="r" style="left:90px;top:1244px;width:2px;height:22px;background:#d5d5d5;"></div>
<div class="r" style="left:92px;top:1244px;width:1025px;height:22px;background:#fff;"></div>
<div class="r" style="left:174px;top:1246px;width:204px;height:18px;background:#dadce0;border-radius:9px;"></div>
<div class="r" style="left:1117px;top:1244px;width:2px;height:22px;background:#e0e0e0;"></div>
<div class="r" style="left:1119px;top:1244px;width:29px;height:22px;background:#f8f9fa;"></div>
<div class="r" style="left:1148px;top:1244px;width:2px;height:22px;background:#e0e0e0;"></div>
<div class="r" style="left:1150px;top:1244px;width:28px;height:22px;background:#f8f9fa;"></div>
<div class="r" style="left:1178px;top:1242px;width:4px;height:24px;background:#dcdcdc;"></div>
<div class="r" style="left:1182px;top:1244px;width:20px;height:22px;background:#f8f9fa;"></div>
<svg width="1868" height="1268" viewBox="0 0 1868 1268"><path d="M1185.3 1196.5 H1196.3 L1190.8 1190.5 Z M1185.3 1223.8 H1196.3 L1190.8 1229.8 Z M1134.4 1249.7 V1260.7 L1128.4 1255.2 Z M1161.6 1249.7 V1260.7 L1167.6 1255.2 Z" fill="#a6a6a6"/></svg>
</main>
<aside class="panel">
<div class="r" style="left:1228px;top:2px;width:638px;height:1264px;background:#fff;border-radius:22px;"></div>
<span class="t" style="left:1260.30px;top:37.04px;font-size:33.5px;line-height:33.5px;color:#1f1f1f;-webkit-text-stroke:0.45px #1f1f1f;letter-spacing:0.462px;">Conditional format rules</span>
<svg width="1868" height="1268" viewBox="0 0 1868 1268"><path d="M1803.5 46.5 L1822 65 M1822 46.5 L1803.5 65" stroke="#444746" stroke-width="3" fill="none"/></svg>
<div class="r" style="left:1228px;top:110px;width:638px;height:2px;background:#dadce0;"></div>
<span class="t" style="left:1299.97px;top:144.60px;font-size:29.3px;line-height:29.3px;color:#188038;-webkit-text-stroke:0.5px #188038;letter-spacing:0.752px;">Single colour</span>
<span class="t" style="left:1623.71px;top:144.60px;font-size:29.3px;line-height:29.3px;color:#5f6368;-webkit-text-stroke:0.5px #5f6368;letter-spacing:0.812px;">Colour scale</span>
<div class="r" style="left:1284px;top:186px;width:212px;height:6px;background:#188038;border-radius:6px 6px 0 0;"></div>
<span class="t" style="left:1264.45px;top:246.48px;font-size:27.2px;line-height:27.2px;color:#3c4043;-webkit-text-stroke:0.7px #3c4043;letter-spacing:0.393px;">Apply to range</span>
<div class="r" style="left:1264px;top:312px;width:564px;height:67px;border:2px solid #dadce0;border-radius:9px;background:#fff;"></div>
<span class="t" style="left:1283.70px;top:335.10px;font-size:28px;line-height:28px;color:#202124;letter-spacing:-0.351px;">F1:F1000</span>
<svg width="1868" height="1268" viewBox="0 0 1868 1268"><path d="M1777 334 H1809 V362 H1777 Z M1780.4 337.4 V346.3 H1791.3 V337.4 Z M1794.7 337.4 V346.3 H1805.6 V337.4 Z M1780.4 349.7 V358.6 H1791.3 V349.7 Z M1794.7 349.7 V358.6 H1805.6 V349.7 Z" fill="#757575" fill-rule="evenodd"/></svg>
<span class="t" style="left:1262.27px;top:443.98px;font-size:27.2px;line-height:27.2px;color:#3c4043;-webkit-text-stroke:0.7px #3c4043;letter-spacing:0.733px;">Format rules</span>
<span class="t" style="left:1263.71px;top:512.83px;font-size:23px;line-height:23px;color:#5f6368;letter-spacing:0.258px;">Format cells if…</span>
<div class="r" style="left:1264px;top:550px;width:564px;height:68px;border:2px solid #dadce0;border-radius:9px;background:#fff;"></div>
<span class="t" style="left:1282.64px;top:571.34px;font-size:27px;line-height:27px;color:#202124;letter-spacing:0.796px;">Greater than or equal to</span>
<svg width="1868" height="1268" viewBox="0 0 1868 1268"><path d="M1789.5 580 H1805.5 L1797.5 588.2 Z" fill="#444746"/></svg>
<div class="r" style="left:1264px;top:638px;width:351px;height:68px;border:2px solid #dadce0;border-radius:9px;background:#fff;"></div>
<span class="t" style="left:1281.84px;top:662.04px;font-size:27px;line-height:27px;color:#3c4043;letter-spacing:1.182px;">200</span>
<div class="r" style="left:1238px;top:724px;width:608px;height:248px;border:4px solid #1a73e8;box-shadow:-3px 4px 13px 1px rgba(0,0,0,.36), inset 5px 5px 12px -2px rgba(0,0,0,.34);"></div>
<span class="t" style="left:1263.71px;top:765.13px;font-size:23px;line-height:23px;color:#5f6368;letter-spacing:0.687px;">Formatting style</span>
<div class="r" style="left:1262px;top:802px;width:564px;height:146px;border:2px solid #dadce0;border-radius:9px;background:#fff;overflow:hidden;"><div style="height:68px;background:#fee599;border-bottom:2px solid #dadce0;"></div></div>
<span class="t" style="left:1279.89px;top:826.14px;font-size:27px;line-height:27px;color:#ff0000;font-weight:700;letter-spacing:-0.443px;">Custom</span>
<div class="r" style="left:1270px;top:886px;width:52px;height:52px;background:#e6f4ea;border-radius:6px;"></div>
<span class="t" style="left:1283.60px;top:896.17px;font-size:34.3px;line-height:34.3px;color:#444746;font-weight:700;transform:scaleX(.9);transform-origin:0 0;">B</span>
<svg width="1868" height="1268" viewBox="0 0 1868 1268" fill="#444746"><path d="M1348.2 901.2 H1364 V905.2 H1359.3 L1351.6 921 H1356.2 V925 H1340 V921 H1345.7 L1353.4 905.2 H1348.2 Z"/><rect x="1396" y="927.2" width="24" height="3.6"/><path d="M1399.9 901.2 V914.4 A8.05 8.05 0 0 0 1416 914.4 V901.2" fill="none" stroke="#444746" stroke-width="4.2"/><g transform="translate(1445.1 896.6) scale(1.5625)"><path d="M6.85 7.08C6.85 4.37 9.45 3 12.24 3c1.64 0 3 .49 3.9 1.28.77.65 1.46 1.73 1.46 3.24h-3.01c0-.31-.05-.59-.15-.85-.29-.86-1.2-1.28-2.25-1.28-1.86 0-2.34 1.02-2.34 1.7 0 .48.25.88.74 1.21.38.25.77.48 1.41.7H7.39c-.21-.34-.54-.89-.54-1.92zM21 12v-2H3v2h9.620c1.150.45 1.960.75 1.960 1.970 0 1-.81 1.670-2.280 1.670-1.540 0-2.930-.54-2.930-2.510H6.400c0 .55.080 1.130.24 1.580.81 2.290 3.290 3.300 5.670 3.300 2.270 0 5.300-.89 5.300-4.050 0-.3-.010-1.160-.48-1.940H21V12z"/></g><rect x="1450" y="913" width="28.1" height="4"/><path d="M1498 928 H1540 V936 H1498 Z" fill="#ff0000"/><path d="M1544 913.9 H1560 L1552 922.1 Z M1640 913.9 H1656 L1648 922.1 Z"/><path d="M1594 928 H1636 V936 H1594 Z" fill="#fee599"/><g transform="translate(1595.1 891.1) scale(1.5625)"><path d="M16.56 8.94L7.62 0 6.21 1.41l2.38 2.38-5.15 5.15c-.59.59-.59 1.54 0 2.120l5.500 5.500c.29.29.68.44 1.060.44s.77-.15 1.060-.44l5.500-5.500c.59-.58.59-1.530 0-2.120zM5.210 10L10 5.210 14.790 10H5.210zM19 11.500s-2 2.170-2 3.500c0 1.100.9 2 2 2s2-.9 2-2c0-1.330-2-3.500-2-3.500z"/></g></svg>
<span class="t" style="left:1506.89px;top:888.97px;font-size:33px;line-height:33px;color:#444746;-webkit-text-stroke:0.8px #444746;">A</span>
<div class="r" style="left:1578px;top:892px;width:2px;height:40px;background:#dadce0;"></div>
<div class="r" style="left:1435px;top:988px;width:190px;height:68px;border:2px solid #dadce0;border-radius:9px;background:#fff;"></div>
<span class="t" style="left:1484.84px;top:1008.82px;font-size:28.8px;line-height:28.8px;color:#188038;-webkit-text-stroke:0.5px #188038;letter-spacing:0.908px;">Cancel</span>
<div class="r" style="left:1661px;top:988px;width:171px;height:72px;background:#188038;border-radius:9px;"></div>
<span class="t" style="left:1710.26px;top:1009.07px;font-size:28.5px;line-height:28.5px;color:#fff;-webkit-text-stroke:0.7px #fff;letter-spacing:0.924px;">Done</span>
<div class="r" style="left:1228px;top:1096px;width:638px;height:2px;background:#dadce0;"></div>
<svg width="1868" height="1268" viewBox="0 0 1868 1268"><path d="M1281 1156 H1302 M1291.5 1145.7 V1166.3" stroke="#188038" stroke-width="3.3" fill="none"/></svg>
<span class="t" style="left:1322.24px;top:1140.80px;font-size:29.3px;line-height:29.3px;color:#188038;-webkit-text-stroke:0.5px #188038;letter-spacing:0.781px;">Add another rule</span>
</aside>
<div class="r" style="left:0px;top:0px;width:1868px;height:2px;background:#999;"></div>
<div class="r" style="left:1866px;top:0px;width:2px;height:1268px;background:#999;"></div>
<div class="r" style="left:0px;top:1266px;width:1868px;height:2px;background:#999;"></div>
</body></html>
